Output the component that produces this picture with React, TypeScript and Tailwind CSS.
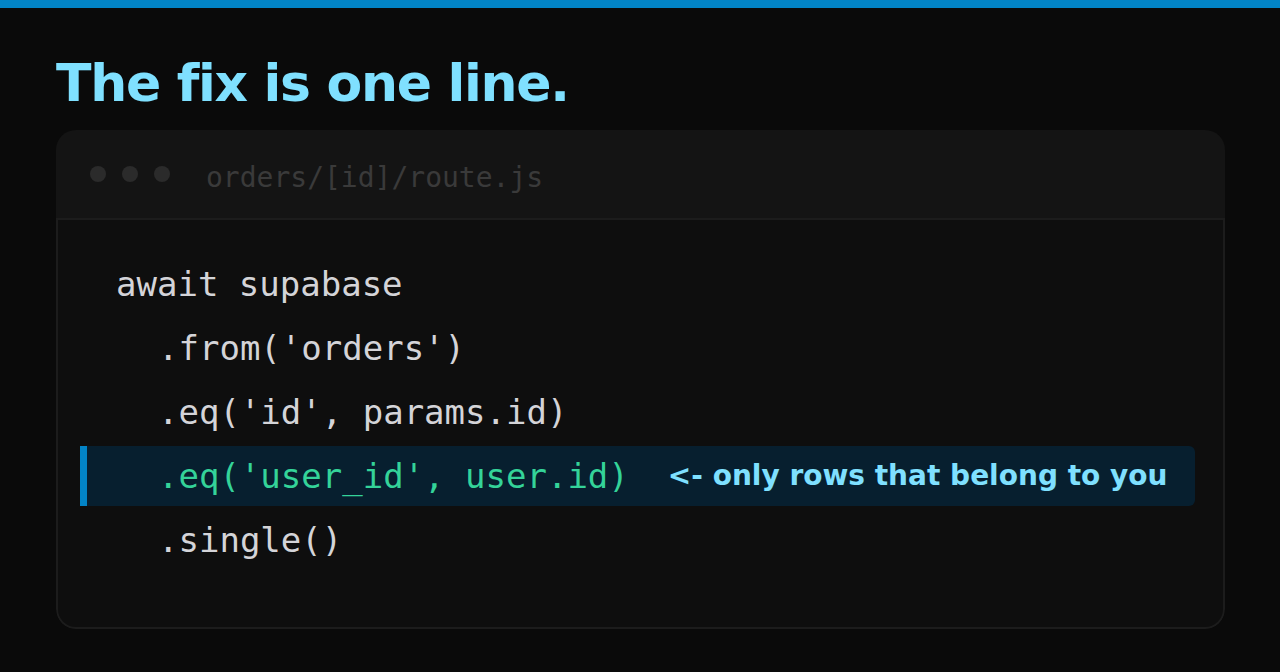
const lines = [
  { text: "await supabase", indent: false, hl: false },
  { text: ".from('orders')", indent: true, hl: false },
  { text: ".eq('id', params.id)", indent: true, hl: false },
  { text: ".eq('user_id', user.id)", indent: true, hl: true },
  { text: ".single()", indent: true, hl: false },
];

export default function App() {
  return (
    <div className="min-h-[672px] w-full bg-[#0a0a0a] font-['DejaVu_Sans',sans-serif]">
      {/* top accent bar */}
      <div className="h-2 bg-[#0284c7]" />

      <div className="px-14 pt-[45px]">
        <h1 className="text-[52px] font-bold leading-[60px] tracking-tight text-[#7fe0ff]">
          The fix is one line.
        </h1>

        {/* code card */}
        <div className="mt-[17px] w-[1169px] overflow-hidden rounded-[20px]">
          <div className="flex h-[88px] items-center bg-[#141414] pl-[34px]">
            <div className="flex gap-4">
              <span className="h-4 w-4 rounded-full bg-[#2b2b2b]" />
              <span className="h-4 w-4 rounded-full bg-[#2b2b2b]" />
              <span className="h-4 w-4 rounded-full bg-[#2b2b2b]" />
            </div>
            <span className="ml-9 pt-[8px] font-['DejaVu_Sans_Mono',monospace] text-[28px] text-[#3a3a3a]">
              orders/[id]/route.js
            </span>
          </div>

          <div className="flex flex-col gap-1 rounded-b-[20px] border-2 border-[#1c1c1c] bg-[#0e0e0e] pt-[34px] pb-[57px] pl-[22px] pr-[28px] font-['DejaVu_Sans_Mono',monospace] text-[34px]">
            {lines.map((line) =>
              line.hl ? (
                <div
                  key={line.text}
                  className="flex h-[60px] items-center rounded-r-md border-l-[7px] border-[#0284c7] bg-[#071f2f] pl-[71px]"
                >
                  <span className="whitespace-pre text-[#34d399]">{line.text}</span>
                  <span className="ml-[39px] font-['DejaVu_Sans',sans-serif] text-[28px] font-bold text-[#7fe0ff]">
                    &lt;- only rows that belong to you
                  </span>
                </div>
              ) : (
                <div
                  key={line.text}
                  className={`flex h-[60px] items-center whitespace-pre text-[#d4d4d8] ${line.indent ? "pl-[78px]" : "pl-9"}`}
                >
                  {line.text}
                </div>
              )
            )}
          </div>
        </div>
      </div>
    </div>
  );
}
